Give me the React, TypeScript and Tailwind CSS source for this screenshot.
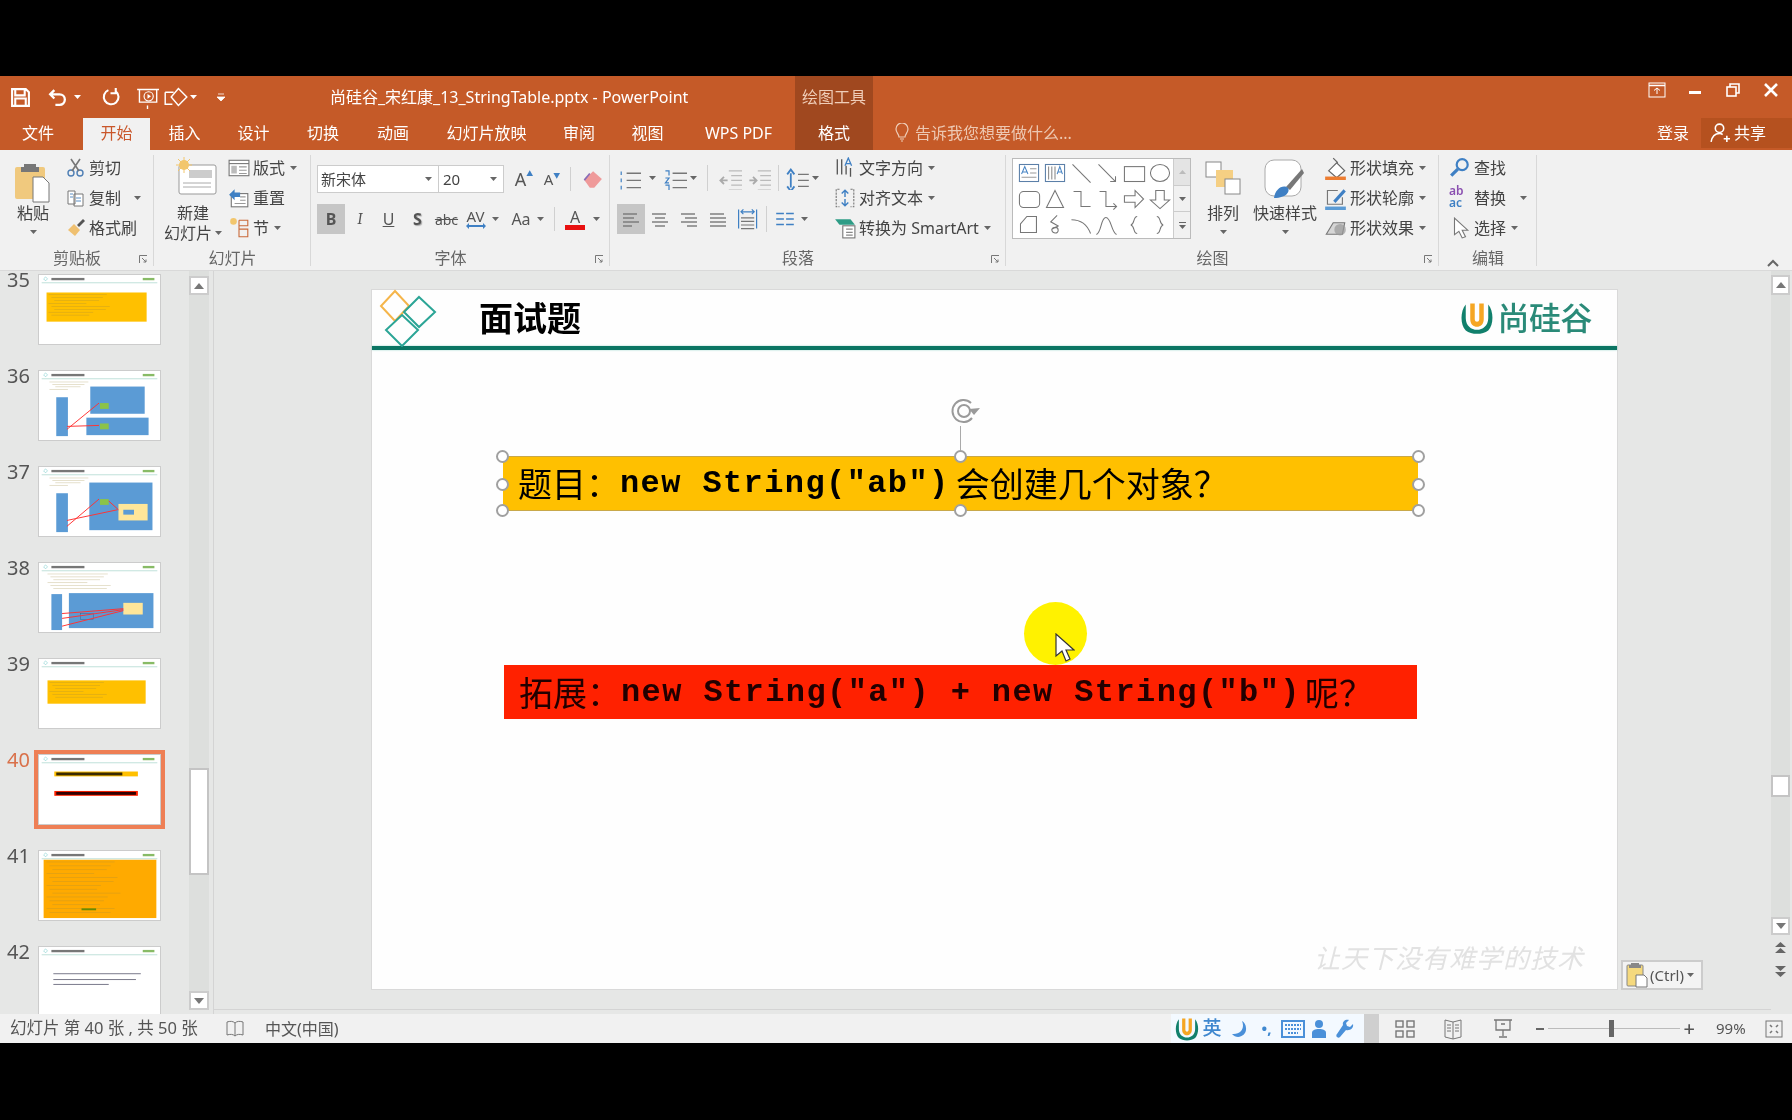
/**
 * PowerPoint window, recording of a slide being edited (slide 40, interview question).
 * Ribbon groups and slide panels are flow laid out; selection handles, the yellow
 * pointer halo and the paste-options tag sit on top of the slide as overlays.
 */
import type { ReactNode } from 'react'

const THUMB_HEAD = (
  <>
    <path d="M4 4l2-2 2 2-2 2z" fill="none" stroke="#7cc" strokeWidth="0.6" />
    <rect x="12" y="3" width="34" height="2.4" fill="#777" />
    <rect x="106" y="3" width="12" height="2.4" fill="#8b6" />
    <rect x="2" y="7.5" width="119" height="1" fill="#bfe0da" />
  </>
)

function Lines({ x, y, w, n, gap = 3 }: { x: number; y: number; w: number; n: number; gap?: number }) {
  return (
    <>
      {Array.from({ length: n }).map((_, i) => (
        <rect key={i} x={x + (i % 3) * 3} y={y + i * gap} width={w - (i % 4) * 7} height="0.6" fill="#a08a40" opacity="0.45" />
      ))}
    </>
  )
}

const BLUE = '#5B9BD5'

const THUMBS: { n: number; art: ReactNode; active?: boolean }[] = [
  { n: 35, art: <><rect x="7" y="18" width="103" height="30" fill="#FFC000" /><Lines x={9} y={20} w={60} n={8} /></> },
  {
    n: 36,
    art: (
      <>
        <Lines x={10} y={11} w={40} n={4} gap={2.5} />
        <rect x="17" y="27" width="12" height="40" fill={BLUE} />
        <rect x="52" y="16" width="56" height="28" fill={BLUE} />
        <rect x="48" y="48" width="64" height="18" fill={BLUE} />
        <rect x="62" y="33" width="9" height="6" fill="#8BC34A" />
        <rect x="62" y="54" width="9" height="6" fill="#8BC34A" />
        <path d="M28 60L61 33M28 57L61 56" stroke="#f33" strokeWidth="1" fill="none" />
      </>
    ),
  },
  {
    n: 37,
    art: (
      <>
        <Lines x={10} y={11} w={40} n={4} gap={2.5} />
        <rect x="17" y="27" width="12" height="40" fill={BLUE} />
        <rect x="51" y="16" width="65" height="49" fill={BLUE} />
        <rect x="81" y="38" width="30" height="17" fill="#FFE699" />
        <rect x="62" y="33" width="9" height="6" fill="#8BC34A" />
        <rect x="86" y="44" width="11" height="5" fill={BLUE} />
        <path d="M28 61L61 33M28 55L80 44M71 35L81 44" stroke="#f33" strokeWidth="1" fill="none" />
      </>
    ),
  },
  {
    n: 38,
    art: (
      <>
        <Lines x={8} y={11} w={62} n={6} gap={3} />
        <rect x="12" y="32" width="11" height="37" fill={BLUE} />
        <rect x="30" y="31" width="87" height="36" fill={BLUE} />
        <rect x="86" y="41" width="20" height="12" fill="#FFE699" />
        <rect x="42" y="52" width="13" height="6" fill={BLUE} stroke="#357" strokeWidth="0.4" />
        <path d="M23 52L86 47M23 57L86 48M23 65L86 49" stroke="#f33" strokeWidth="1" fill="none" />
      </>
    ),
  },
  { n: 39, art: <><rect x="8" y="22" width="101" height="24" fill="#FFC000" /><Lines x={10} y={24} w={56} n={6} /></> },
  {
    n: 40,
    active: true,
    art: (
      <>
        <rect x="15" y="17" width="86" height="5" fill="#FFC000" />
        <rect x="17" y="18" width="68" height="3" fill="#3a2a00" />
        <rect x="15" y="37" width="86" height="5" fill="#FF2100" />
        <rect x="17" y="38" width="82" height="3" fill="#300" />
      </>
    ),
  },
  {
    n: 41,
    art: (
      <>
        <rect x="4" y="9" width="116" height="60" fill="#FFAA00" />
        <Lines x={7} y={11} w={70} n={14} gap={4} />
        <rect x="43" y="59" width="15" height="2" fill="#6a8a00" />
      </>
    ),
  },
  {
    n: 42,
    art: (
      <>
        <rect x="14" y="27" width="90" height="1" fill="#778" />
        <rect x="14" y="33" width="85" height="1" fill="#778" />
        <rect x="14" y="38" width="57" height="1" fill="#778" />
      </>
    ),
  },
]

function Caret({ className = '' }: { className?: string }) {
  return (
    <svg width="7" height="4" viewBox="0 0 7 4" className={`shrink-0 ${className}`}>
      <path d="M0 0h7L3.5 4z" fill="#666" />
    </svg>
  )
}

function Ico({ size = 20, children, className = '' }: { size?: number; children: ReactNode; className?: string }) {
  return (
    <svg width={size} height={size} viewBox="0 0 20 20" fill="none" className={`shrink-0 ${className}`}>
      {children}
    </svg>
  )
}

function Launcher() {
  return (
    <svg width="9" height="9" viewBox="0 0 9 9" className="shrink-0" fill="none" stroke="#777">
      <path d="M.5 8V.5H8M3 3l4 4M7 4.500V7H4.500" />
    </svg>
  )
}

function Group({ label, className, labelClass = '', launcher, children }: { label: string; className: string; labelClass?: string; launcher?: boolean; children: ReactNode }) {
  return (
    <div className={`relative flex h-full shrink-0 flex-col ${className}`}>
      <div className="flex h-[96px] pt-[3px]">{children}</div>
      <div className={`relative flex h-[24px] items-center justify-center text-[16px] text-[#666] ${labelClass}`}>
        {label}
      </div>
      {launcher && <span className="absolute right-[6px] bottom-[6px]"><Launcher /></span>}
      <div className="absolute top-[5px] right-0 bottom-[4px] w-px bg-[#d8d8d8]" />
    </div>
  )
}

/** one of the three stacked small-button rows */
function Row({ icon, text, caret, caretClass = 'ml-[5px]', className = '' }: { icon: ReactNode; text: string; caret?: boolean; caretClass?: string; className?: string }) {
  return (
    <div className={`flex h-[30px] items-center ${className}`}>
      {icon}
      <span className="ml-[3px] text-[16px] leading-none whitespace-nowrap text-[#444]">{text}</span>
      {caret && <Caret className={caretClass} />}
    </div>
  )
}

function ParaLines({ aligned }: { aligned: 'l' | 'c' | 'r' | 'j' }) {
  const rows = [
    [2, 16],
    [aligned === 'l' ? 2 : aligned === 'c' ? 5 : aligned === 'r' ? 6 : 2, aligned === 'l' ? 13 : aligned === 'c' ? 15 : aligned === 'r' ? 18 : 18],
    [2, 18],
    [aligned === 'l' ? 2 : aligned === 'c' ? 5 : aligned === 'r' ? 8 : 2, aligned === 'l' ? 11 : aligned === 'c' ? 15 : aligned === 'r' ? 18 : 18],
  ]
  return (
    <Ico>
      {rows.map(([a, b], i) => (
        <path key={i} d={`M${a} ${5 + i * 4}H${b}`} stroke="#777" strokeWidth="1.4" />
      ))}
    </Ico>
  )
}

const SHAPES: { id: string; node: ReactNode }[] = [
  { id: 'a', node: <g><rect x="2" y="3" width="18" height="16" stroke="#5b7fa8" fill="#fff" /><path d="M12 7h6M12 11h6M4 15h14" stroke="#999" /><path d="M4 12l3-7 3 7M5 10h4" stroke="#4a86c5" /></g> },
  { id: 'b', node: <g><rect x="2" y="3" width="18" height="16" stroke="#5b7fa8" fill="#fff" /><path d="M5 5v12M8 5v12M11 5v12" stroke="#888" /><path d="M13 12l2.500-7 2.500 7M14 10h3" stroke="#4a86c5" /></g> },
  { id: 'c', node: <path d="M3 3l17 17" stroke="#777" /> },
  { id: 'd', node: <path d="M3 3l16 16m-5 0h5v-5" stroke="#777" /> },
  { id: 'e', node: <rect x="2" y="5" width="19" height="14" stroke="#777" /> },
  { id: 'f', node: <ellipse cx="11" cy="11" rx="9" ry="8" stroke="#777" /> },
  { id: 'g', node: <rect x="2" y="4" width="19" height="15" rx="4" stroke="#777" /> },
  { id: 'h', node: <path d="M11 3l8 16H3z" stroke="#777" /> },
  { id: 'i', node: <path d="M4 4h7v14h9" stroke="#777" /> },
  { id: 'j', node: <path d="M4 4h6v14h10m-3-3l3 3-3 3" stroke="#777" /> },
  { id: 'k', node: <path d="M2 8h10V3l8 8-8 8v-5H2z" stroke="#777" /> },
  { id: 'l', node: <path d="M7 3h8v9h5l-9 8-9-8h5z" stroke="#777" /> },
  { id: 'm', node: <path d="M3 10l6-7h9v15H3z" stroke="#777" /> },
  { id: 'n', node: <path d="M13 2L7 8l7 4-6 3c0 4 6 5 6 1s-5-3-6-1" stroke="#777" /> },
  { id: 'o', node: <path d="M2 6c9 0 15 5 18 13" stroke="#777" /> },
  { id: 'p', node: <path d="M1 20C6 18 5 4 10 4s5 14 10 16" stroke="#777" /> },
  { id: 'q', node: <path d="M14 3c-4 0-2 7-6 8 4 1 2 8 6 8" stroke="#777" /> },
  { id: 'r', node: <path d="M8 3c4 0 2 7 6 8-4 1-2 8-6 8" stroke="#777" /> },
]

function Handle({ className }: { className: string }) {
  return <span className={`absolute h-[13px] w-[13px] rounded-full border-2 border-[#a0a0a0] bg-white ${className}`} />
}

function ULogo({ size }: { size: number }) {
  return (
    <svg width={size} height={size} viewBox="0 0 32 32" className="shrink-0">
      <path d="M6 4C1 10 1 22 6 27c5 4 15 4 20 0 5-5 5-17 0-23v12c0 14-20 14-20 0z" fill="#11806c" />
      <path d="M10 3h4v14c0 3 4 3 4 0V3h4v14c0 9-12 9-12 0z" fill="#f5a623" />
    </svg>
  )
}

export default function App() {
  return (
    <div className="flex h-[1120px] w-[1792px] flex-col overflow-hidden bg-black font-['Noto_Sans','Noto_Sans_CJK_SC',sans-serif] blur-[0.4px]">
      <div className="h-[76px] shrink-0" />

      {/* title bar */}
      <div className="flex h-[42px] shrink-0 bg-[#C55A28] text-white">
        <div className="flex w-[330px] items-center pl-[10px]">
          <Ico size={21}><path d="M2 2h13l3 3v13H2zM5 2v6h9V2M5 18v-7h10v7" stroke="#fff" strokeWidth="2" /></Ico>
          <Ico size={21} className="ml-[16px]"><path d="M7 3L3 7l4 4M3 7h9a5 5 0 010 10H8" stroke="#fff" strokeWidth="2.2" /></Ico>
          <svg width="7" height="4" viewBox="0 0 7 4" className="ml-[6px]"><path d="M0 0h7L3.500 4z" fill="#fff" /></svg>
          <Ico size={21} className="ml-[19px]"><path d="M8 3a7 7 0 107 1M15 1v5h-5" stroke="#fff" strokeWidth="2" /></Ico>
          <Ico size={23} className="ml-[15px]"><path d="M1 3h19M3 3v11h15V3M10 17v3M6 21h9" stroke="#fff" strokeWidth="1.2" /><circle cx="11" cy="9" r="4" stroke="#fff" /><path d="M10 7l3 2-3 2z" fill="#fff" /></Ico>
          <Ico size={24} className="ml-[5px]"><path d="M1 6h7M1 6v10h6M12 3l7 7-7 7-6-7z" stroke="#fff" strokeWidth="1.2" /></Ico>
          <svg width="7" height="4" viewBox="0 0 7 4" className="ml-[2px]"><path d="M0 0h7L3.500 4z" fill="#fff" /></svg>
          <svg width="8" height="9" viewBox="0 0 8 9" className="ml-[20px]"><path d="M1 1h6M0 4h8L4 8z" fill="#fff" stroke="#fff" strokeWidth="0.8" /></svg>
        </div>
        <div className="flex w-[465px] items-center text-[16px] whitespace-nowrap">尚硅谷_宋红康_13_StringTable.pptx - PowerPoint</div>
        <div className="flex w-[78px] items-center justify-center bg-[#A0481F] text-[16px] text-[#efcdb8]">绘图工具</div>
        <div className="flex flex-1 items-start justify-end pt-[6px]">
          <div className="flex w-[40px] justify-center">
            <svg width="18" height="16" viewBox="0 0 18 16" fill="none" stroke="#fff"><rect x="1" y="1" width="16" height="14" /><path d="M1 3.500h16" strokeWidth="1.5" /><path d="M9 12V6M6 8.500L9 6l3 2.500" /></svg>
          </div>
          <div className="flex h-[16px] w-[36px] items-center justify-center"><span className="mt-[5px] h-[3px] w-[12px] bg-white" /></div>
          <div className="mr-[8px] flex h-[16px] w-[40px] items-center justify-center">
            <svg width="14" height="14" viewBox="0 0 14 14" fill="none" stroke="#fff" strokeWidth="1.6"><rect x="1" y="4" width="9" height="9" /><path d="M4 4V1h9v9h-3" /></svg>
          </div>
          <div className="mr-[11px] flex h-[16px] w-[20px] items-center justify-center">
            <svg width="14" height="14" viewBox="0 0 14 14" stroke="#fff" strokeWidth="2.6"><path d="M1 1l12 12M13 1L1 13" /></svg>
          </div>
        </div>
      </div>

      {/* ribbon tabs */}
      <div className="flex h-[32px] shrink-0 bg-[#C55A28] text-[16px] leading-none text-white">
        <div className="flex w-[83px] items-center justify-center pr-[7px] pb-[3px]">文件</div>
        <div className="flex w-[67px] items-center justify-center bg-[#F1F1F1] pb-[3px] text-[#C9562A]">开始</div>
        <div className="flex w-[69px] items-center justify-center pb-[3px]">插入</div>
        <div className="flex w-[69px] items-center justify-center pb-[3px]">设计</div>
        <div className="flex w-[70px] items-center justify-center pb-[3px]">切换</div>
        <div className="flex w-[70px] items-center justify-center pb-[3px]">动画</div>
        <div className="flex w-[117px] items-center justify-center pb-[3px]">幻灯片放映</div>
        <div className="flex w-[68px] items-center justify-center pb-[3px]">审阅</div>
        <div className="flex w-[69px] items-center justify-center pb-[3px]">视图</div>
        <div className="flex w-[113px] items-center justify-center pb-[3px]">WPS PDF</div>
        <div className="flex w-[78px] items-center justify-center bg-[#A0481F] pb-[3px]">格式</div>
        <div className="flex items-center pb-[3px] pl-[19px] text-[#edc8b2]">
          <Ico size={20}><path d="M7 14c0-3-3-4-3-8a6 6 0 0112 0c0 4-3 5-3 8zM8 16h4M9 18h2" stroke="#efcdb8" strokeWidth="1.2" /></Ico>
          <span className="ml-[3px]">告诉我您想要做什么...</span>
        </div>
        <div className="flex-1" />
        <div className="flex w-[44px] items-center pb-[3px]">登录</div>
        <div className="flex h-[30px] w-[91px] items-center bg-[#B5511F] pb-[1px] pl-[8px]">
          <Ico size={21}><circle cx="10" cy="6" r="4" stroke="#fff" strokeWidth="1.5" /><path d="M2 19c1-6 4-8 8-8 1 0 2 0 3 1M14 16h6M17 13v6" stroke="#fff" strokeWidth="1.5" /></Ico>
          <span className="ml-[4px]">共享</span>
        </div>
      </div>

      {/* ribbon */}
      <div className="flex h-[120px] shrink-0 bg-[#F1F1F1]">
        <Group label="剪贴板" launcher className="w-[154px]">
          <div className="flex w-[66px] shrink-0 flex-col items-center">
            <svg width="38" height="42" viewBox="0 0 38 42" fill="none" className="mt-[8px]">
              <rect x="1" y="6" width="30" height="32" rx="2" fill="#F0C97E" />
              <path d="M10 6V3h12v3h3v5H7V6z" fill="#777" />
              <path d="M19 16h10l6 6v19H19z" fill="#fff" stroke="#777" />
            </svg>
            <span className="mt-[2px] text-[16px] leading-none text-[#444]">粘贴</span>
            <Caret className="mt-[9px]" />
          </div>
          <div className="flex flex-col">
            <Row text="剪切" icon={<Ico><circle cx="5" cy="15" r="3" stroke="#4f7fb5" strokeWidth="1.4" /><circle cx="14" cy="15" r="3" stroke="#4f7fb5" strokeWidth="1.4" /><path d="M6 13L14 1M13 13L5 1" stroke="#777" strokeWidth="1.6" /></Ico>} />
            <Row text="复制" caret caretClass="ml-[13px]" icon={<Ico><path d="M2 3h7v13H2zM8 6h9v12H8z" stroke="#777" fill="#fff" /><path d="M4 6h3M4 9h3M10 10h5M10 13h5" stroke="#5b8fc5" /></Ico>} />
            <Row text="格式刷" icon={<Ico><path d="M2 12l6-6 6 6-5 6z" fill="#EFC070" /><path d="M11 7l6-6 2 2-6 6z" fill="#555" /></Ico>} />
          </div>
        </Group>

        <Group label="幻灯片" className="w-[157px]">
          <div className="flex w-[73px] shrink-0 flex-col items-center pl-[5px]">
            <svg width="42" height="38" viewBox="0 0 42 38" fill="none" className="mt-[4px] ml-[6px]">
              <rect x="4" y="8" width="37" height="29" rx="2" fill="#fff" stroke="#999" />
              <rect x="14" y="13" width="23" height="8" fill="#ccc" />
              <path d="M8 26h28M8 30h28" stroke="#aaa" />
              <circle cx="9" cy="8" r="5" fill="#F2C66D" />
              <path d="M9 0v16M1 8h16M3 2l12 12M15 2L3 14" stroke="#F2C66D" />
            </svg>
            <span className="mt-[10px] text-[16px] leading-none text-[#444]">新建</span>
            <span className="mt-[4px] flex items-center text-[16px] leading-none whitespace-nowrap text-[#444]">幻灯片<Caret className="ml-[3px]" /></span>
          </div>
          <div className="ml-[1px] flex flex-col">
            <Row text="版式" caret icon={<Ico size={22}><rect x="1" y="3" width="18" height="14" stroke="#777" fill="#fff" /><path d="M1 6h18" stroke="#777" /><path d="M3 8h5v7H3z" fill="#bbb" /><path d="M10 9h7M10 12h7M10 15h7" stroke="#999" /></Ico>} />
            <Row text="重置" icon={<Ico size={22}><rect x="3" y="6" width="15" height="12" stroke="#777" fill="#fff" /><path d="M11 9h5M11 12h5M6 15h10" stroke="#999" /><path d="M1 7l5-5v3h5v4H6v3z" fill="#3f80c4" /></Ico>} />
            <Row text="节" caret icon={<Ico size={22}><circle cx="5" cy="4" r="3" fill="#F2C66D" /><path d="M10 3h8v5h-8M10 11h8v7h-8zM10 3v15" stroke="#c96a3a" /></Ico>} />
          </div>
        </Group>

        <Group label="字体" launcher labelClass="pr-[20px]" className="w-[299px]">
          <div className="flex flex-col pt-[11px] pl-[6px]">
            <div className="flex h-[30px] items-center">
              <div className="flex h-[28px] w-[122px] items-center border border-[#ccc] bg-white pl-[3px] text-[15px] text-[#444]">新宋体<span className="flex-1" /><Caret className="mr-[6px]" /></div>
              <div className="flex h-[28px] w-[65px] items-center border border-l-0 border-[#ccc] bg-white pl-[4px] text-[15px] text-[#444]">20<span className="flex-1" /><Caret className="mr-[6px]" /></div>
              <span className="ml-[6px] flex w-[28px] items-start justify-center text-[18px] leading-none text-[#555]">A<span className="text-[7px] text-[#3f80c4]">▲</span></span>
              <span className="flex w-[28px] items-start justify-center text-[15px] leading-none text-[#555]">A<span className="text-[7px] text-[#3f80c4]">▼</span></span>
              <span className="ml-[4px] h-[24px] w-px bg-[#d0d0d0]" />
              <Ico size={22} className="ml-[10px]"><path d="M3 11l8-8 8 7-7 8H8z" fill="#EF9A9A" /><path d="M3 11l5-6" stroke="#8a6bb5" strokeWidth="1.5" /></Ico>
            </div>
            <div className="mt-[10px] flex h-[30px] items-center text-[16px] text-[#555]">
              <span className="flex h-[30px] w-[28px] items-center justify-center bg-[#C6C6C6] font-bold">B</span>
              <span className="w-[29px] pl-[1px] text-center font-serif italic">I</span>
              <span className="w-[29px] text-center underline">U</span>
              <span className="w-[29px] text-center font-bold [text-shadow:1px_1px_1px_#aaa]">S</span>
              <span className="w-[29px] text-center text-[14px] line-through">abc</span>
              <span className="relative w-[29px] text-center text-[15px] leading-[14px]">
                AV
                <svg width="20" height="6" viewBox="0 0 20 6" className="mx-auto block"><path d="M0 3l3-3v2h14V0l3 3-3 3V4H3v2z" fill="#3f80c4" /></svg>
              </span>
              <Caret className="ml-[2px]" />
              <span className="ml-[8px] w-[28px] text-center">Aa</span>
              <Caret className="ml-[2px]" />
              <span className="ml-[10px] h-[24px] w-px bg-[#d0d0d0]" />
              <span className="ml-[7px] flex w-[26px] flex-col items-center text-[16px] leading-[16px]">A<span className="h-[5px] w-[20px] bg-[#E81010]" /></span>
              <Caret className="ml-[5px]" />
            </div>
          </div>
        </Group>

        <Group label="段落" launcher labelClass="pr-[20px]" className="w-[396px]">
          <div className="flex w-[226px] shrink-0 flex-col pt-[10px] pl-[7px]">
            <div className="flex h-[30px] items-center">
              <Ico size={24}><path d="M3 6h1M3 12h1M3 18h1" stroke="#3f80c4" strokeWidth="3" /><path d="M8 6h12M8 12h12M8 18h12" stroke="#777" strokeWidth="1.2" /></Ico>
              <Caret className="ml-[8px]" />
              <Ico size={24} className="ml-[7px]"><path d="M2 4h3v4M2 10h3l-3 4h3M2 16h3v5H2" stroke="#3f80c4" /><path d="M8 6h12M8 12h12M8 18h12" stroke="#777" strokeWidth="1.2" /></Ico>
              <Caret className="ml-[3px]" />
              <span className="ml-[10px] h-[26px] w-px bg-[#d0d0d0]" />
              <Ico size={24} className="ml-[10px]"><path d="M9 4h11M11 8h9M11 12h9M11 16h9M9 20h11" stroke="#bbb" /><path d="M8 12H2m3-3l-3 3 3 3" stroke="#aaa" strokeWidth="1.5" /></Ico>
              <Ico size={24} className="ml-[5px]"><path d="M9 4h11M11 8h9M11 12h9M11 16h9M9 20h11" stroke="#bbb" /><path d="M2 12h6m-3-3l3 3-3 3" stroke="#aaa" strokeWidth="1.5" /></Ico>
              <span className="ml-[7px] h-[26px] w-px bg-[#d0d0d0]" />
              <Ico size={24} className="ml-[7px]"><path d="M4 6v12M1 7l3-4 3 4M1 17l3 4 3-4" stroke="#3f80c4" strokeWidth="1.5" /><path d="M10 7h9M10 12h9M10 17h9" stroke="#777" strokeWidth="1.2" /></Ico>
              <Caret className="ml-[2px]" />
            </div>
            <div className="mt-[11px] flex h-[30px] items-center">
              <span className="flex h-[30px] w-[28px] items-center justify-center bg-[#C6C6C6]"><ParaLines aligned="l" /></span>
              <span className="flex w-[29px] justify-center"><ParaLines aligned="c" /></span>
              <span className="flex w-[29px] justify-center"><ParaLines aligned="r" /></span>
              <span className="flex w-[29px] justify-center"><ParaLines aligned="j" /></span>
              <span className="flex w-[29px] justify-center">
                <Ico size={24}><path d="M3 2v16M18 2v16" stroke="#3f80c4" /><path d="M5 4h11M7 2L5 4l2 2M14 2l2 2-2 2" stroke="#3f80c4" /><path d="M5 9h11M5 12h11M5 15h11M5 18h11" stroke="#777" /></Ico>
              </span>
              <span className="ml-[5px] h-[26px] w-px bg-[#d0d0d0]" />
              <span className="ml-[7px]"><Ico size={22}><path d="M2 5h7M2 10h7M2 15h7M11 5h7M11 10h7M11 15h7" stroke="#3f80c4" strokeWidth="1.4" /></Ico></span>
              <Caret className="ml-[5px]" />
            </div>
          </div>
          <div className="flex flex-col">
            <Row text="文字方向" caret className="-ml-[2px]" icon={<Ico size={22}><path d="M3 2v14M7 2v14M11 8v8M15 10v8" stroke="#555" strokeWidth="1.2" /><path d="M10 8l3-7 3 7M11 6h4" stroke="#3f80c4" strokeWidth="1.2" /></Ico>} />
            <Row text="对齐文本" caret className="-ml-[2px]" icon={<Ico size={22}><path d="M5 2H2v16h3M15 2h3v16h-3" stroke="#777" strokeDasharray="2 1" /><path d="M10 3v6M7 6l3-3 3 3M10 11v6M7 14l3 3 3-3" stroke="#3f80c4" strokeWidth="1.3" /></Ico>} />
            <Row text="转换为 SmartArt" caret className="-ml-[2px]" icon={<Ico size={22}><path d="M1 2h14l4 5H5z" fill="#2e9c86" /><rect x="8" y="8" width="11" height="11" fill="#fff" stroke="#777" /><path d="M11 11h6M11 14h6M11 16.500h6" stroke="#888" /></Ico>} />
          </div>
        </Group>

        <Group label="绘图" launcher labelClass="pr-[20px]" className="w-[433px]">
          <div className="mt-[5px] ml-[6px] flex h-[81px] w-[179px] shrink-0 border border-[#bbb]">
            <div className="grid h-full w-[160px] shrink-0 grid-cols-6 content-center bg-white pl-[3px]">
              {SHAPES.map((s) => (
                <svg key={s.id} width="26" height="26" viewBox="0 0 22 22" fill="none" className="scale-90">
                  {s.node}
                </svg>
              ))}
            </div>
            <div className="flex flex-1 flex-col border-l border-[#ccc] text-[#666]">
              <div className="flex flex-1 items-center justify-center bg-[#e4e4e4]"><svg width="7" height="4" viewBox="0 0 7 4"><path d="M0 4h7L3.500 0z" fill="#bbb" /></svg></div>
              <div className="flex flex-1 items-center justify-center border-y border-[#ccc]"><Caret /></div>
              <div className="flex flex-1 flex-col items-center justify-center"><span className="mb-[2px] h-px w-[7px] bg-[#666]" /><Caret /></div>
            </div>
          </div>
          <div className="ml-[14px] flex w-[36px] shrink-0 flex-col items-center">
            <svg width="36" height="35" viewBox="0 0 36 35" fill="none" className="mt-[8px]">
              <rect x="1" y="1" width="15" height="15" fill="#fff" stroke="#888" />
              <rect x="11" y="9" width="17" height="17" fill="#F5CF83" />
              <rect x="20" y="18" width="15" height="15" fill="#fff" stroke="#888" />
            </svg>
            <span className="mt-[9px] text-[16px] leading-none whitespace-nowrap text-[#444]">排列</span>
            <Caret className="mt-[9px]" />
          </div>
          <div className="ml-[8px] flex w-[72px] shrink-0 flex-col items-center">
            <svg width="42" height="40" viewBox="0 0 42 40" fill="none" className="mt-[6px]">
              <rect x="1" y="1" width="36" height="36" rx="9" fill="#fff" stroke="#aaa" />
              <path d="M38 10L22 28l4 3 14-17z" fill="#777" />
              <path d="M10 39c1-9 9-14 14-10 2 3-1 10-14 10z" fill="#3f80c4" />
            </svg>
            <span className="mt-[6px] text-[16px] leading-none whitespace-nowrap text-[#444]">快速样式</span>
            <Caret className="mt-[9px]" />
          </div>
          <div className="ml-[3px] flex flex-col">
            <Row text="形状填充" caret icon={<Ico size={23}><path d="M4 12l7-7 7 7-7 6z" stroke="#666" fill="#fff" /><path d="M8 1l4 4" stroke="#666" /><rect x="1" y="17" width="18" height="3" fill="#ED7D31" /></Ico>} />
            <Row text="形状轮廓" caret icon={<Ico size={23}><path d="M12 3H3v12h13V9" stroke="#777" /><path d="M8 12l9-10 2 2-9 10z" fill="#3f80c4" /><rect x="1" y="17" width="18" height="3" fill="#5B9BD5" /></Ico>} />
            <Row text="形状效果" caret icon={<Ico size={23}><path d="M2 15L8 5h10l-2 10z" fill="#d6d6d6" stroke="#777" /><circle cx="14" cy="11" r="5" fill="#999" opacity="0.7" /></Ico>} />
          </div>
        </Group>

        <Group label="编辑" className="w-[98px]">
          <div className="flex flex-col pl-[10px]">
            <Row text="查找" icon={<Ico size={22}><circle cx="12" cy="7" r="5" stroke="#3f80c4" strokeWidth="2" /><path d="M8 11l-6 6" stroke="#3f80c4" strokeWidth="3" /></Ico>} />
            <Row text="替换" caret caretClass="ml-[14px]" icon={<span className="flex h-[26px] w-[22px] flex-col text-[12px] leading-[12px] font-semibold"><span className="text-[#8a4fb0]">ab</span><span className="text-[#3f80c4]">ac</span></span>} />
            <Row text="选择" caret icon={<Ico size={22}><path d="M5 1v15l4-3 3 6 3-1-3-6h5z" stroke="#777" fill="#fff" /></Ico>} />
          </div>
        </Group>

        <div className="flex flex-1 items-end justify-end pr-[13px] pb-[3px]">
          <svg width="12" height="8" viewBox="0 0 12 8" fill="none" stroke="#666" strokeWidth="2"><path d="M1 7l5-5 5 5" /></svg>
        </div>
      </div>

      <div className="h-px shrink-0 bg-[#d9d9d9]" />

      {/* workspace */}
      <div className="flex h-[743px] shrink-0 bg-[#E6E7E6]">
        <div className="flex h-full w-[214px] shrink-0 border-r border-[#d4d4d4]">
          <div className="flex w-[189px] flex-col gap-[25px] overflow-hidden pt-[3px]">
            {THUMBS.map((t) => (
              <div key={t.n} className="flex shrink-0">
                <span className={`-mt-[3px] h-[18px] w-[38px] pl-[7px] text-[20px] leading-[18px] ${t.active ? 'text-[#D9714A]' : 'text-[#555]'}`}>{t.n}</span>
                <div className={`h-[71px] w-[123px] shrink-0 border border-[#ccc] bg-white ${t.active ? 'outline-4 outline-[#EE7F55]' : ''}`}>
                  <svg viewBox="0 0 123 71" width="121" height="69">
                    {THUMB_HEAD}
                    {t.art}
                  </svg>
                </div>
              </div>
            ))}
          </div>
          <div className="flex h-[739px] w-[20px] flex-col bg-[#DDDFDD]">
            <div className="mt-[5px] flex h-[19px] items-center justify-center border-2 border-[#ccc] bg-white"><svg width="10" height="6" viewBox="0 0 10 6"><path d="M0 6h10L5 0z" fill="#777" /></svg></div>
            <div className="mt-[473px] h-[107px] border-2 border-[#c4c4c4] bg-white" />
            <div className="flex-1" />
            <div className="flex h-[19px] items-center justify-center border-2 border-[#ccc] bg-white"><svg width="10" height="6" viewBox="0 0 10 6"><path d="M0 0h10L5 6z" fill="#777" /></svg></div>
          </div>
        </div>

        <div className="relative h-[739px] flex-1 border-b border-[#d4d4d4] pt-[18px] pl-[157px]">
          {/* slide */}
          <div className="relative h-[701px] w-[1247px] border border-[#d9d9d9] bg-[#FEFEFE]">
            <div className="flex h-[56px] items-center">
              <svg width="66" height="58" viewBox="0 0 66 58" fill="none" strokeWidth="2" className="shrink-0">
                <path d="M23 2l14 15-14 15L9 17z" stroke="#F5B54A" />
                <path d="M47 8l16 15-16 15-15-15z" stroke="#2BA596" />
                <path d="M30 26l16 15-16 16-16-16z" stroke="#2BA596" />
              </svg>
              <span className="ml-[41px] text-[34px] leading-none font-bold text-black">面试题</span>
              <div className="flex-1" />
              <ULogo size={36} />
              <span className="mr-[25px] ml-[2px] text-[32px] leading-none font-medium tracking-[-0.5px] text-[#2a8a78]">尚硅谷</span>
            </div>
            <div className="h-[4px] bg-[#0B7563] shadow-[0_0_2px_#8fd0c4]" />

            {/* selected text box */}
            <div className="relative mt-[106px] ml-[131px] flex h-[55px] w-[915px] items-center border-y border-[#c8a84a] bg-[#FFC000] pt-[1px] pl-[15px] text-[34px] leading-none text-black">
              <span>题目：</span>
              <span className="font-['Liberation_Mono',monospace] text-[32px] font-bold tracking-[1.4px]">new String("ab")</span>
              <span className="ml-[6px]">会创建几个对象？</span>
              <Handle className="-top-[7px] -left-[7px]" />
              <Handle className="top-[21px] -left-[7px]" />
              <Handle className="-bottom-[7px] -left-[7px]" />
              <Handle className="-top-[7px] left-[451px]" />
              <Handle className="-bottom-[7px] left-[451px]" />
              <Handle className="-top-[7px] -right-[7px]" />
              <Handle className="top-[21px] -right-[7px]" />
              <Handle className="-right-[7px] -bottom-[7px]" />
              <span className="absolute -top-[31px] left-[457px] h-[24px] w-px bg-[#aaa]" />
              <svg width="36" height="30" viewBox="0 0 36 30" fill="none" className="absolute -top-[61px] left-[443px]" stroke="#9a9a9a" strokeWidth="2">
                <path d="M26 22a11 11 0 11-1-15" />
                <circle cx="18" cy="15" r="6" />
                <path d="M34 12l-6 7-5-6z" fill="#9a9a9a" stroke="none" />
              </svg>
            </div>

            <div className="mt-[154px] ml-[132px] flex h-[54px] w-[913px] items-center bg-[#FF2100] pt-[2px] pl-[15px] text-[34px] leading-none text-[#200]">
              <span>拓展：</span>
              <span className="font-['Liberation_Mono',monospace] text-[32px] font-bold tracking-[1.4px] whitespace-pre">new String("a") + new String("b")</span>
              <span className="ml-[4px]">呢？</span>
            </div>

            {/* pointer halo */}
            <span className="absolute top-[312px] left-[652px] h-[63px] w-[63px] rounded-full bg-[#FFF200]" />
            <svg width="20" height="30" viewBox="0 0 20 30" className="absolute top-[343px] left-[683px]">
              <path d="M1 1v22l6-5 4 10 4-2-4-9h8z" fill="#fff" stroke="#333" strokeWidth="1.2" />
            </svg>

            <span className="absolute right-[33px] bottom-[18px] text-[26px] leading-none tracking-[1px] text-[#e2e2e2] italic">让天下没有难学的技术</span>
          </div>

          {/* paste options tag */}
          <div className="absolute top-[689px] left-[1407px] flex h-[30px] w-[82px] items-center border-2 border-[#ccc] bg-[#F3F3F3] pl-[3px] text-[15px] text-[#555]">
            <svg width="22" height="26" viewBox="0 0 22 26" fill="none"><rect x="1" y="3" width="16" height="21" rx="1" fill="#F5D97E" stroke="#888" /><path d="M5 3V1h8v2h2v3H3V3z" fill="#888" /><path d="M10 13h8l3 3v9H10z" fill="#fff" stroke="#777" /></svg>
            <span className="ml-[2px]">(Ctrl)</span>
            <Caret className="ml-[3px]" />
          </div>
        </div>

        {/* vertical scrollbar */}
        <div className="flex h-[739px] w-[21px] shrink-0 flex-col">
          <div className="flex h-[664px] w-[19px] shrink-0 flex-col bg-[#DDDFDD]">
            <div className="mt-[4px] flex h-[20px] items-center justify-center border-2 border-[#ccc] bg-white"><svg width="10" height="6" viewBox="0 0 10 6"><path d="M0 6h10L5 0z" fill="#777" /></svg></div>
            <div className="mt-[480px] h-[22px] border-2 border-[#c4c4c4] bg-white" />
            <div className="flex-1" />
            <div className="flex h-[18px] items-center justify-center border-2 border-[#ccc] bg-white"><svg width="10" height="6" viewBox="0 0 10 6"><path d="M0 0h10L5 6z" fill="#777" /></svg></div>
          </div>
          <div className="mt-[7px] flex w-[19px] justify-center"><svg width="11" height="12" viewBox="0 0 11 12" fill="#666"><path d="M0 5l5.500-5L11 5zM0 11l5.500-5 5.500 5z" /></svg></div>
          <div className="mt-[11px] flex w-[19px] justify-center"><svg width="11" height="12" viewBox="0 0 11 12" fill="#666"><path d="M0 1h11L5.500 6zM0 7h11l-5.500 5z" /></svg></div>
        </div>
      </div>

      {/* status bar */}
      <div className="flex h-[29px] shrink-0 items-center bg-[#F1F1F1] text-[16px] text-[#555]">
        <span className="ml-[10px] w-[215px] text-[16.5px] whitespace-pre">幻灯片 第 40 张 , 共 50 张</span>
        <Ico size={20}><path d="M10 4C8 2 5 2 2 3v13c3-1 6-1 8 1 2-2 5-2 8-1V3c-3-1-6-1-8 1zM10 4v13" stroke="#777" /></Ico>
        <span className="ml-[20px]">中文(中国)</span>
        <div className="flex-1" />
        <div className="flex h-[29px] w-[193px] items-center bg-[#F3F9FF] pl-[3px] text-[#3f88cf]">
          <ULogo size={26} />
          <span className="ml-[3px] text-[19px] leading-none font-medium">英</span>
          <svg width="18" height="20" viewBox="0 0 18 20" className="ml-[8px]"><path d="M12 2c3 7-1 14-10 13 5 6 15 2 14-6 0-3-2-6-4-7z" fill="#4a90d9" /></svg>
          <span className="ml-[14px] text-[15px] leading-none font-bold">•,</span>
          <svg width="24" height="18" viewBox="0 0 24 18" className="ml-[10px]"><rect x="1" y="1" width="22" height="16" fill="none" stroke="#4a90d9" strokeWidth="2" /><path d="M4 5h16M4 9h16M7 13h10" stroke="#4a90d9" strokeWidth="2" strokeDasharray="2 1" /></svg>
          <svg width="16" height="20" viewBox="0 0 16 20" className="ml-[6px]"><circle cx="8" cy="5" r="4" fill="#4a90d9" /><path d="M1 19v-5c0-3 3-4 7-4s7 1 7 4v5z" fill="#4a90d9" /></svg>
          <svg width="20" height="20" viewBox="0 0 20 20" className="ml-[8px]"><path d="M18 5l-3 3-3-1-1-3 3-3c-3-1-7 1-6 5L2 15c-2 2 1 5 3 3l6-7c4 1 8-2 7-6z" fill="#4a90d9" /></svg>
        </div>
        <div className="h-[29px] w-[15px] bg-[#CFCFCF]" />
        <svg width="20" height="18" viewBox="0 0 20 18" fill="none" stroke="#777" strokeWidth="1.4" className="ml-[16px]"><rect x="1" y="1" width="7" height="6" /><rect x="12" y="1" width="7" height="6" /><rect x="1" y="11" width="7" height="6" /><rect x="12" y="11" width="7" height="6" /></svg>
        <svg width="18" height="22" viewBox="0 0 18 22" fill="none" stroke="#777" className="ml-[29px]"><path d="M1 2l8 2 8-2v17l-8 2-8-2zM9 4v17M3 7h4M3 10h4M3 13h4M11 7h4M11 10h4M11 13h4" /></svg>
        <svg width="20" height="22" viewBox="0 0 20 22" fill="none" stroke="#777" strokeWidth="1.3" className="ml-[31px]"><path d="M1 2h18M3 2v10h14V2M10 12v6M6 19h8M8 6h4" /></svg>
        <span className="ml-[23px] h-[2px] w-[8px] bg-[#666]" />
        <div className="relative ml-[4px] h-px w-[132px] bg-[#bbb]">
          <span className="absolute -top-[8px] left-[61px] h-[17px] w-[5px] bg-[#666]" />
        </div>
        <span className="ml-[4px] text-[20px] leading-none font-medium text-[#555]">+</span>
        <span className="ml-[21px] w-[34px] text-[15px]">99%</span>
        <svg width="18" height="18" viewBox="0 0 18 18" fill="none" stroke="#777" className="mr-[9px] ml-[15px]"><rect x="1" y="1" width="16" height="16" /><path d="M5 5l2 2M13 5l-2 2M5 13l2-2M13 13l-2-2" strokeWidth="1.6" /></svg>
      </div>
      <div className="flex-1" />
    </div>
  )
}
